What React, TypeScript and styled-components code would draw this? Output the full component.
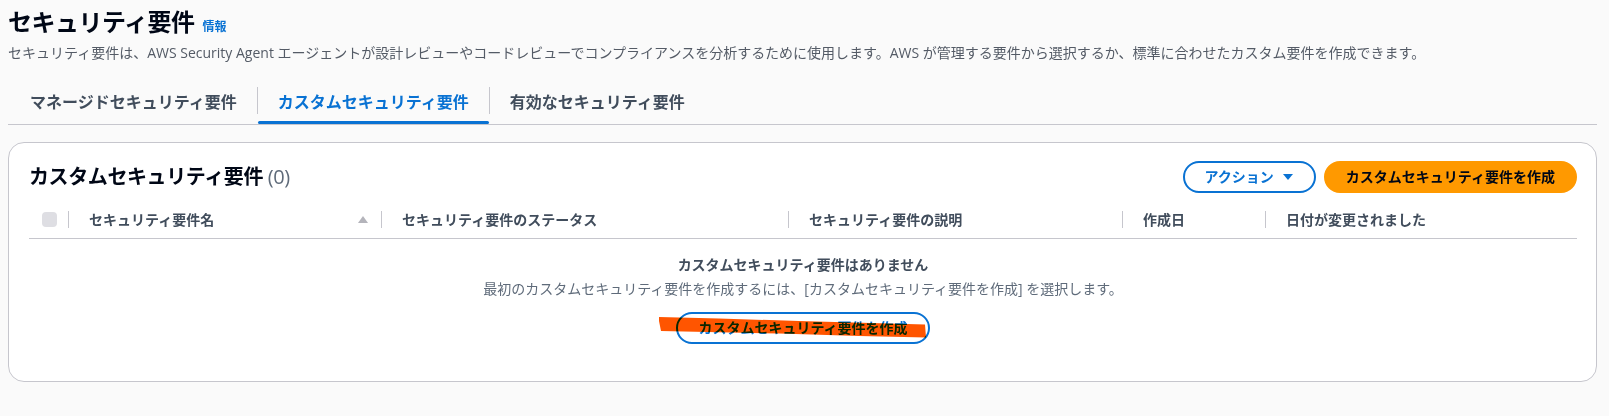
import React from "react";
import styled, { createGlobalStyle } from "styled-components";

const GlobalStyle = createGlobalStyle`
  html, body {
    margin: 0;
    padding: 0;
    background: #fafafa;
  }
  body {
    font-family: "Open Sans", "Noto Sans CJK JP", sans-serif;
    color: #000716;
  }
  * { box-sizing: border-box; }
`;

const Page = styled.div`
  padding: 7px 12px 0 8px;
`;

const TitleRow = styled.div`
  display: flex;
  align-items: baseline;
  gap: 8px;
  height: 30px;
`;

const Title = styled.h1`
  margin: 0;
  font-size: 24px;
  line-height: 30px;
  font-weight: 700;
  letter-spacing: -0.5px;
  color: #000716;
`;

const InfoLink = styled.a`
  font-size: 12px;
  line-height: 16px;
  font-weight: 700;
  color: #0972d3;
  text-decoration: none;
`;

const Description = styled.p`
  margin: 6px 0 0;
  font-size: 14px;
  line-height: 20px;
  color: #545b66;
`;

const TabList = styled.div`
  display: flex;
  margin-top: 19px;
  padding-left: 2px;
  border-bottom: 1px solid #c6c6cd;
`;

const Tab = styled.div`
  display: flex;
  flex-direction: column;
  height: 42px;
`;

const TabLabel = styled.span<{ $active?: boolean }>`
  flex: 1;
  display: flex;
  align-items: center;
  padding: 0 20px;
  font-size: 16px;
  line-height: 20px;
  font-weight: 700;
  color: ${(p) => (p.$active ? "#0972d3" : "#414d5c")};
`;

const TabIndicator = styled.span<{ $active?: boolean }>`
  height: 3px;
  border-radius: 2px;
  background: ${(p) => (p.$active ? "#0972d3" : "transparent")};
`;

const TabDivider = styled.span`
  width: 1px;
  height: 27px;
  margin-top: 5px;
  background: #c6c6cd;
`;

const Panel = styled.section`
  margin-top: 17px;
  background: #ffffff;
  border: 1px solid #c6c6cd;
  border-radius: 16px;
  padding: 18px 19px 37px 20px;
`;

const PanelHeader = styled.div`
  display: flex;
  align-items: center;
  justify-content: space-between;
  height: 32px;
`;

const PanelTitle = styled.h2`
  margin: 0;
  font-size: 20px;
  line-height: 24px;
  font-weight: 700;
  letter-spacing: -0.4px;
  color: #000716;
`;

const Count = styled.span`
  font-weight: 400;
  color: #5f6b7a;
`;

const Actions = styled.div`
  display: flex;
  gap: 8px;
`;

const Button = styled.button<{ $variant?: "primary" | "normal" }>`
  display: inline-flex;
  align-items: center;
  height: 32px;
  padding: 0 20px;
  border-radius: 20px;
  border: 2px solid ${(p) => (p.$variant === "primary" ? "#ff9900" : "#0972d3")};
  background: ${(p) => (p.$variant === "primary" ? "#ff9900" : "#ffffff")};
  color: ${(p) => (p.$variant === "primary" ? "#000716" : "#0972d3")};
  font-family: "Open Sans", "Noto Sans CJK JP", sans-serif;
  font-size: 14px;
  line-height: 20px;
  font-weight: 700;
  cursor: pointer;
  white-space: nowrap;
`;

const Caret = styled.svg`
  margin-left: 8px;
  flex: none;
`;

const TableHead = styled.div`
  display: grid;
  grid-template-columns: 39px 313px 407px 334px 143px 1fr;
  margin-top: 8px;
  height: 38px;
  border-bottom: 1px solid #c6c6cd;
`;

const HeadCell = styled.div`
  display: flex;
  align-items: center;
  font-size: 14px;
  line-height: 20px;
  font-weight: 700;
  color: #414d5c;
  white-space: nowrap;
`;

const ColDivider = styled.span`
  flex: none;
  width: 1px;
  height: 17px;
  margin-right: 20px;
  background: #c6c6cd;
`;

const Checkbox = styled.span`
  width: 15px;
  height: 15px;
  margin-left: 13px;
  border-radius: 4px;
  background: #dedee3;
`;

const SortIcon = styled.svg`
  margin-left: auto;
  margin-right: 13px;
  flex: none;
`;

const Empty = styled.div`
  display: flex;
  flex-direction: column;
  align-items: center;
  padding-top: 16px;
`;

const EmptyTitle = styled.div`
  font-size: 14px;
  line-height: 20px;
  font-weight: 700;
  color: #414d5c;
`;

const EmptyText = styled.div`
  margin-top: 4px;
  font-size: 14px;
  line-height: 20px;
  color: #5f6b7a;
`;

const EmptyAction = styled.div`
  position: relative;
  display: inline-flex;
  margin-top: 13px;
`;

const Scribble = styled.svg`
  position: absolute;
  left: -17px;
  top: 0;
  overflow: visible;
  mix-blend-mode: multiply;
  pointer-events: none;
`;

const columns = [
  "セキュリティ要件名",
  "セキュリティ要件のステータス",
  "セキュリティ要件の説明",
  "作成日",
  "日付が変更されました",
];

export default function App() {
  return (
    <>
      <GlobalStyle />
      <Page>
        <TitleRow>
          <Title>セキュリティ要件</Title>
          <InfoLink href="#">情報</InfoLink>
        </TitleRow>
        <Description>
          セキュリティ要件は、AWS Security Agent エージェントが設計レビューやコードレビューでコンプライアンスを分析するために使用します。AWS が管理する要件から選択するか、標準に合わせたカスタム要件を作成できます。
        </Description>

        <TabList>
          <Tab>
            <TabLabel>マネージドセキュリティ要件</TabLabel>
            <TabIndicator />
          </Tab>
          <TabDivider />
          <Tab>
            <TabLabel $active>カスタムセキュリティ要件</TabLabel>
            <TabIndicator $active />
          </Tab>
          <TabDivider />
          <Tab>
            <TabLabel>有効なセキュリティ要件</TabLabel>
            <TabIndicator />
          </Tab>
        </TabList>

        <Panel>
          <PanelHeader>
            <PanelTitle>
              カスタムセキュリティ要件 <Count>(0)</Count>
            </PanelTitle>
            <Actions>
              <Button>
                アクション
                <Caret width="12" height="12" viewBox="0 0 12 12">
                  <path d="M1 3h10L6 9z" fill="#0972d3" />
                </Caret>
              </Button>
              <Button $variant="primary">カスタムセキュリティ要件を作成</Button>
            </Actions>
          </PanelHeader>

          <TableHead>
            <HeadCell>
              <Checkbox />
            </HeadCell>
            {columns.map((c, i) => (
              <HeadCell key={c}>
                <ColDivider />
                {c}
                {i === 0 && (
                  <SortIcon width="10" height="7" viewBox="0 0 10 7">
                    <path d="M0 7L5 0l5 7z" fill="#b4b4bb" />
                  </SortIcon>
                )}
              </HeadCell>
            ))}
          </TableHead>

          <Empty>
            <EmptyTitle>カスタムセキュリティ要件はありません</EmptyTitle>
            <EmptyText>
              最初のカスタムセキュリティ要件を作成するには、[カスタムセキュリティ要件を作成] を選択します。
            </EmptyText>
            <EmptyAction>
              <Button>カスタムセキュリティ要件を作成</Button>
              <Scribble width="268" height="32" viewBox="0 0 268 32">
                <path
                  d="M0 5 L60 6.5 L140 9 L266 12.5 L267 25.5 L200 24 L120 21.5 L2 19 L1 14 L0 9 Z"
                  fill="#ff5500"
                />
              </Scribble>
            </EmptyAction>
          </Empty>
        </Panel>
      </Page>
    </>
  );
}
